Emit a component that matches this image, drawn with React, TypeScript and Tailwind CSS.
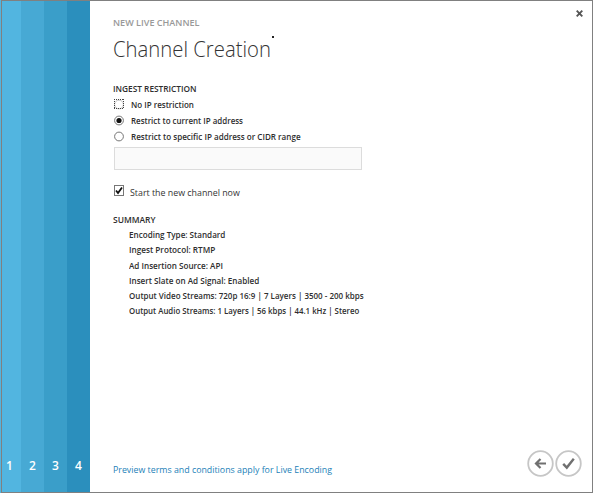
import type { ReactNode } from 'react';

const steps = [
  { n: 1, cls: 'w-[19px] bg-[#52b5e0]', pad: 'pr-[4px]' },
  { n: 2, cls: 'w-[23px] bg-[#47a9d4]', pad: 'pr-0' },
  { n: 3, cls: 'w-[23px] bg-[#3a9ec9]', pad: 'pr-0' },
  { n: 4, cls: 'w-[23px] bg-[#2b8fbd]', pad: 'pr-0' },
];

const restrictions = [
  { label: 'No IP restriction', checked: false, focused: true, fit: 'scale-x-[0.891]' },
  { label: 'Restrict to current IP address', checked: true, focused: false, fit: 'scale-x-[0.884]' },
  { label: 'Restrict to specific IP address or CIDR range', checked: false, focused: false, fit: 'scale-x-[0.898]' },
];

const summary = [
  { text: 'Encoding Type: Standard', fit: 'scale-x-[0.9]' },
  { text: 'Ingest Protocol: RTMP', fit: 'scale-x-[0.91]' },
  { text: 'Ad Insertion Source: API', fit: 'scale-x-[0.902]' },
  { text: 'Insert Slate on Ad Signal: Enabled', fit: 'scale-x-[0.901]' },
  { text: 'Output Video Streams: 720p 16:9 | 7 Layers | 3500 - 200 kbps', fit: 'scale-x-[0.889]' },
  { text: 'Output Audio Streams: 1 Layers | 56 kbps | 44.1 kHz | Stereo', fit: 'scale-x-[0.87]' },
];

function Radio({ checked, focused }: { checked: boolean; focused: boolean }) {
  return (
    <svg width="11" height="12" viewBox="0 0 11 12" className="shrink-0">
      <circle cx="5" cy="5.5" r="4.4" fill="#fff" stroke={focused ? '#bbb' : '#666'} strokeWidth="0.9" />
      {focused && (
        <path
          d="M0 0.5H10M0 9.5H10M0.5 0V10M9.5 0V10"
          fill="none"
          stroke="#444"
          strokeWidth="1"
          strokeDasharray="1 1"
          shapeRendering="crispEdges"
        />
      )}
      {checked && <circle cx="5" cy="5.5" r="2.6" fill="#111" />}
    </svg>
  );
}

function RoundButton({ label, children }: { label: string; children: ReactNode }) {
  return (
    <button aria-label={label} className="block size-[27px]">
      <svg width="27" height="27" viewBox="0 0 27 27" fill="none">
        <circle cx="13.5" cy="13.5" r="12.3" stroke="#c6c6c6" strokeWidth="1.8" />
        {children}
      </svg>
    </button>
  );
}

export default function App() {
  return (
    <div className="h-[493px] w-[593px] bg-[#52b5e0] pl-px">
      <div className="flex h-full overflow-hidden border border-[#808080] bg-white font-['Open_Sans','Noto_Sans',sans-serif] text-[#2e2e2e]">
        <nav className="flex h-full w-[88px] shrink-0">
          {steps.map((s) => (
            <div key={s.n} className={`flex flex-col items-center justify-end pb-[18px] ${s.cls} ${s.pad}`}>
              <span className="text-[12px] leading-[16px] font-semibold text-white">{s.n}</span>
            </div>
          ))}
        </nav>
        <main className="flex min-w-0 flex-1 flex-col pl-[24px]">
          <header className="flex h-[82px] justify-between">
            <div className="w-[170px]">
              <div className="mt-[16px] -ml-[0.7px] origin-left scale-x-[0.953] text-[9.5px] leading-[12px] font-semibold whitespace-nowrap text-[#999]">NEW LIVE CHANNEL</div>
              <div className="flex">
                <h1 className="mt-[4px] -ml-[1px] w-[158px] origin-left scale-x-[0.922] text-[22px] leading-[30px] font-light whitespace-nowrap text-[#333]">Channel Creation</h1>
                <span className="mt-[7px] ml-[1px] size-[2px] bg-[#222]" />
              </div>
            </div>
            <button aria-label="Close" className="mt-[9px] mr-[9px] size-[7px]">
              <svg width="7" height="7" viewBox="0 0 7 7" stroke="#555" strokeWidth="1.9">
                <path d="M0.7 0.7 6.3 6.3M6.3 0.7 0.7 6.3" />
              </svg>
            </button>
          </header>

          <h2 className="-ml-[0.8px] w-fit origin-left scale-x-[0.922] text-[9px] leading-[12px] font-semibold">INGEST RESTRICTION</h2>
          <div className="mt-[2px]">
            {restrictions.map((r) => (
              <label key={r.label} className="flex h-[16px] items-center gap-[6px]">
                <Radio checked={r.checked} focused={r.focused} />
                <span className={`origin-left text-[9px] leading-[12px] font-semibold whitespace-nowrap ${r.fit}`}>{r.label}</span>
              </label>
            ))}
          </div>
          <div className="mt-[2px] h-[23px] w-[248px] border border-[#dcdcdc] bg-[#fafafa]" />
          <label className="mt-[15px] flex h-[16px] gap-[6px]">
            <svg width="10" height="12" viewBox="0 0 10 12" fill="none" className="shrink-0">
              <rect x="0.5" y="0.5" width="9" height="10" fill="#fff" stroke="#777" />
              <path d="M2 5.5 4 8 8 2.5" stroke="#111" strokeWidth="1.8" />
            </svg>
            <span className="mt-[2px] origin-left scale-x-[0.902] text-[9.8px] leading-[12px] whitespace-nowrap text-[#333]">Start the new channel now</span>
          </label>
          <h2 className="mt-[13px] -ml-[0.8px] w-fit origin-left scale-x-[0.94] text-[9px] leading-[12px] font-semibold">SUMMARY</h2>
          <ul className="mt-[1px] pl-[15px]">
            {summary.map((s) => (
              <li key={s.text} className={`h-[15.25px] w-fit origin-left text-[9px] leading-[15.25px] font-semibold whitespace-nowrap ${s.fit}`}>{s.text}</li>
            ))}
          </ul>

          <footer className="mt-auto mb-[14px] flex h-[29px] items-center justify-between pr-[10px]">
            <a className="mt-[12px] -ml-[1px] w-[220px] origin-left scale-x-[0.9] text-[9.8px] leading-[12px] whitespace-nowrap text-[#1c7fb8]">Preview terms and conditions apply for Live Encoding</a>
            <div className="flex gap-[1px]">
              <RoundButton label="Back">
                <path d="M19 13.5H9.5M13.5 9 9 13.5 13.5 18" stroke="#707070" strokeWidth="2.2" />
              </RoundButton>
              <RoundButton label="Finish">
                <path d="M8.2 13.8 11.8 17.6 18.8 8.8" stroke="#707070" strokeWidth="2.4" />
              </RoundButton>
            </div>
          </footer>
        </main>
      </div>
    </div>
  );
}
